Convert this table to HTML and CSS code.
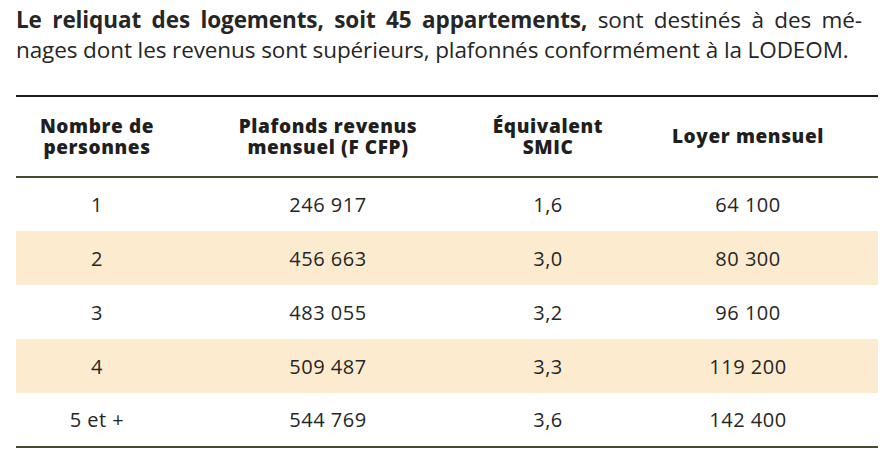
FILE: index.html
```html
<!DOCTYPE html>
<html lang="fr">
<head>
<meta charset="utf-8">
<link rel="stylesheet" href="styles.css">
</head>
<body>
<div class="page">
  <p class="intro"><span class="line just"><strong>Le reliquat des logements, soit 45 appartements,</strong> sont destinés à des mé-</span><span class="line">nages dont les revenus sont supérieurs, plafonnés conformément à la LODEOM.</span></p>
  <table class="grid">
    <colgroup>
      <col class="c1"><col class="c2"><col class="c3"><col class="c4">
    </colgroup>
    <thead>
      <tr>
        <th>Nombre de<br>personnes</th>
        <th>Plafonds revenus<br>mensuel (F CFP)</th>
        <th>Équivalent<br>SMIC</th>
        <th>Loyer mensuel</th>
      </tr>
    </thead>
    <tbody>
      <tr class="first"><td>1</td><td>246 917</td><td>1,6</td><td>64 100</td></tr>
      <tr class="alt"><td>2</td><td>456 663</td><td>3,0</td><td>80 300</td></tr>
      <tr><td>3</td><td>483 055</td><td>3,2</td><td>96 100</td></tr>
      <tr class="alt"><td>4</td><td>509 487</td><td>3,3</td><td>119 200</td></tr>
      <tr class="last"><td>5 et +</td><td>544 769</td><td>3,6</td><td>142 400</td></tr>
    </tbody>
  </table>
</div>
</body>
</html>
```
FILE: styles.css
```css
html, body {
  margin: 0;
  padding: 0;
  background: #ffffff;
}
.page {
  padding: 5px 13px 0 16px;
  color: #1f1f1f;
}
.intro {
  margin: 0;
  width: 846px;
  font-family: "Open Sans", "Liberation Sans", sans-serif;
  font-size: 22.5px;
  line-height: 30px;
  letter-spacing: -0.1px;
  color: #262626;
}
.intro .line {
  display: block;
  white-space: nowrap;
}
.intro .just {
  text-align: justify;
  text-align-last: justify;
  white-space: normal;
}
.intro strong {
  font-weight: 700;
}
.grid {
  margin-top: 30px;
  width: 862px;
  border-collapse: separate;
  border-spacing: 0;
  table-layout: fixed;
  font-family: "Open Sans", "DejaVu Sans", sans-serif;
  color: #1f1f1f;
}
.c1 { width: 162px; }
.c2 { width: 300px; }
.c3 { width: 140px; }
.c4 { width: 260px; }
.grid th {
  height: 79px;
  box-sizing: content-box;
  padding: 0;
  border-top: 2px solid #1c1c1c;
  border-bottom: 2px solid #454c32;
  font-size: 19px;
  line-height: 21px;
  letter-spacing: 0.6px;
  font-weight: 800;
  text-align: center;
  vertical-align: middle;
}
.grid td {
  height: 54px;
  box-sizing: border-box;
  padding: 0;
  font-size: 20px;
  letter-spacing: 0.5px;
  font-weight: 400;
  text-align: center;
  vertical-align: middle;
  color: #262626;
}
.grid tr.first td {
  height: 53px;
}
.grid tr.last td {
  height: 55px;
  border-bottom: 2px solid #454c32;
}
.grid tr.alt td {
  background: #fdebd0;
}
```
